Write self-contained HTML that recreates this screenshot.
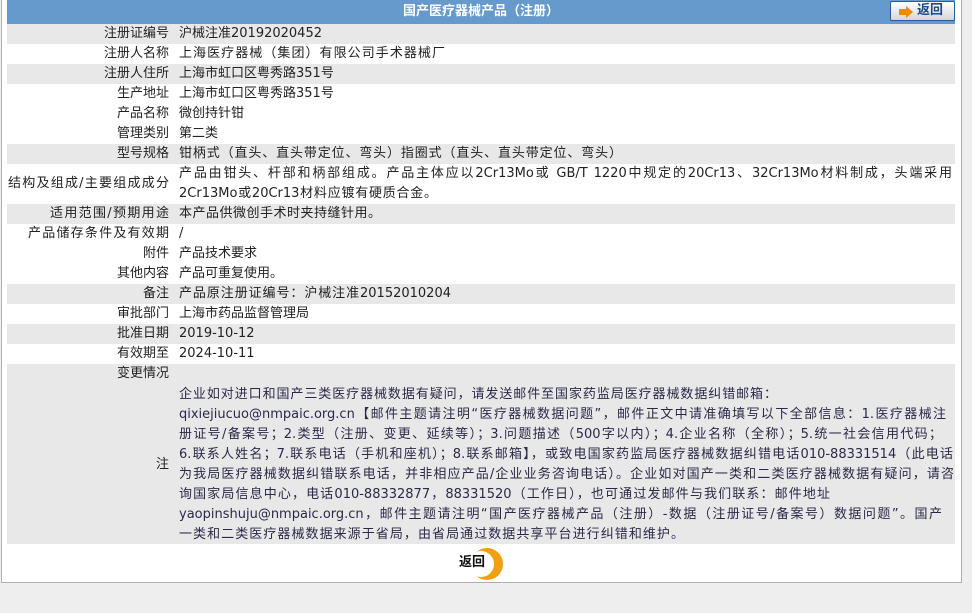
<!DOCTYPE html>
<html><head><meta charset="utf-8"><style>
*{margin:0;padding:0;box-sizing:border-box}
body{width:972px;height:613px;background:#eeeeee;font-family:"DejaVu Sans","Noto Sans CJK SC",sans-serif;font-size:13px;color:#222;position:relative;overflow:hidden}
#box{position:absolute;left:1px;top:0;width:961px;height:583px;background:#fff;border:1px solid #b0b0b0;border-top:none}
#hdr{position:absolute;left:7px;top:0;width:948px;height:24px;background:#6699cc;color:#fff;font-weight:bold;text-align:center;line-height:24px}
.r{position:absolute;left:7px;width:948px;height:20px;line-height:20px;white-space:nowrap}
.g{background:#e8e8e8}
.l{position:absolute;right:786px;text-align:right}
.v{position:absolute;left:172px}
.j{display:block;text-align:justify;text-align-last:justify;text-justify:inter-character;white-space:nowrap}
#btn{position:absolute;left:890px;top:1px;width:65px;height:20px;border:1px solid #2a5b9c;border-radius:2px;background:linear-gradient(#fff,#d6d6d6);color:#1d4a8c;font-weight:bold;line-height:18px;font-size:13px}
</style></head><body>
<div id="box"></div>
<div id="hdr">国产医疗器械产品（注册）</div>
<div id="btn"><svg style="position:absolute;left:8px;top:4px" width="14" height="12"><path d="M0 3h7V0l7 6-7 6V9H0z" fill="#f08a00"/></svg><span style="position:absolute;left:26px;top:0">返回</span></div>
<div class="r g" style="top:24px"><span class="l">注册证编号</span><span class="v">沪械注准20192020452</span></div>
<div class="r" style="top:44px"><span class="l">注册人名称</span><span class="v j" style="width:266px">上海医疗器械（集团）有限公司手术器械厂</span></div>
<div class="r g" style="top:64px"><span class="l">注册人住所</span><span class="v">上海市虹口区粤秀路351号</span></div>
<div class="r" style="top:84px"><span class="l">生产地址</span><span class="v">上海市虹口区粤秀路351号</span></div>
<div class="r" style="top:104px"><span class="l">产品名称</span><span class="v">微创持针钳</span></div>
<div class="r" style="top:124px"><span class="l">管理类别</span><span class="v">第二类</span></div>
<div class="r g" style="top:144px"><span class="l">型号规格</span><span class="v j" style="width:443px">钳柄式（直头、直头带定位、弯头）指圈式（直头、直头带定位、弯头）</span></div>
<div class="r" style="top:164px;height:40px"><span class="l j" style="top:10px;width:161px">结构及组成/主要组成成分</span><span class="v"><span class="j" style="width:773px">产品由钳头、杆部和柄部组成。产品主体应以2Cr13Mo或 GB/T 1220中规定的20Cr13、32Cr13Mo材料制成，头端采用</span><span class="j" style="width:258px">2Cr13Mo或20Cr13材料应镀有硬质合金。</span></span></div>
<div class="r g" style="top:204px"><span class="l j" style="width:119px">适用范围/预期用途</span><span class="v j" style="width:202px">本产品供微创手术时夹持缝针用。</span></div>
<div class="r" style="top:224px"><span class="l j" style="width:141px">产品储存条件及有效期</span><span class="v">/</span></div>
<div class="r" style="top:244px"><span class="l">附件</span><span class="v">产品技术要求</span></div>
<div class="r" style="top:264px"><span class="l">其他内容</span><span class="v j" style="width:104px">产品可重复使用。</span></div>
<div class="r g" style="top:284px"><span class="l">备注</span><span class="v j" style="width:272px">产品原注册证编号：沪械注准20152010204</span></div>
<div class="r" style="top:304px"><span class="l">审批部门</span><span class="v">上海市药品监督管理局</span></div>
<div class="r g" style="top:324px"><span class="l">批准日期</span><span class="v">2019-10-12</span></div>
<div class="r" style="top:344px"><span class="l">有效期至</span><span class="v">2024-10-11</span></div>
<div class="r g" style="top:364px"><span class="l">变更情况</span></div>
<div class="r g" style="top:384px;height:160px;color:#2a2a48"><span class="l" style="top:71px;color:#222">注</span><span class="v" style="top:1px">
<span class="j" style="width:598px">企业如对进口和国产三类医疗器械数据有疑问，请发送邮件至国家药监局医疗器械数据纠错邮箱：</span>
<span class="j" style="width:767px">qixiejiucuo@nmpaic.org.cn【邮件主题请注明“医疗器械数据问题”，邮件正文中请准确填写以下全部信息：1.医疗器械注</span>
<span class="j" style="width:763px">册证号/备案号；2.类型（注册、变更、延续等）；3.问题描述（500字以内）；4.企业名称（全称）；5.统一社会信用代码；</span>
<span class="j" style="width:774px">6.联系人姓名；7.联系电话（手机和座机）；8.联系邮箱】，或致电国家药监局医疗器械数据纠错电话010-88331514（此电话</span>
<span class="j" style="width:775px">为我局医疗器械数据纠错联系电话，并非相应产品/企业业务咨询电话）。企业如对国产一类和二类医疗器械数据有疑问，请咨</span>
<span class="j" style="width:651px">询国家局信息中心，电话010-88332877，88331520（工作日），也可通过发邮件与我们联系：邮件地址</span>
<span class="j" style="width:763px">yaopinshuju@nmpaic.org.cn，邮件主题请注明“国产医疗器械产品（注册）-数据（注册证号/备案号）数据问题”。国产</span>
<span class="j" style="width:505px">一类和二类医疗器械数据来源于省局，由省局通过数据共享平台进行纠错和维护。</span>
</span></div>
<svg style="position:absolute;left:468px;top:547px" width="38" height="34"><circle cx="19" cy="17" r="16" fill="#f0a010"/><circle cx="13" cy="17" r="13" fill="#fff"/></svg>
<div style="position:absolute;left:459px;top:553px;font-weight:bold;color:#111;line-height:20px">返回</div>
</body></html>
